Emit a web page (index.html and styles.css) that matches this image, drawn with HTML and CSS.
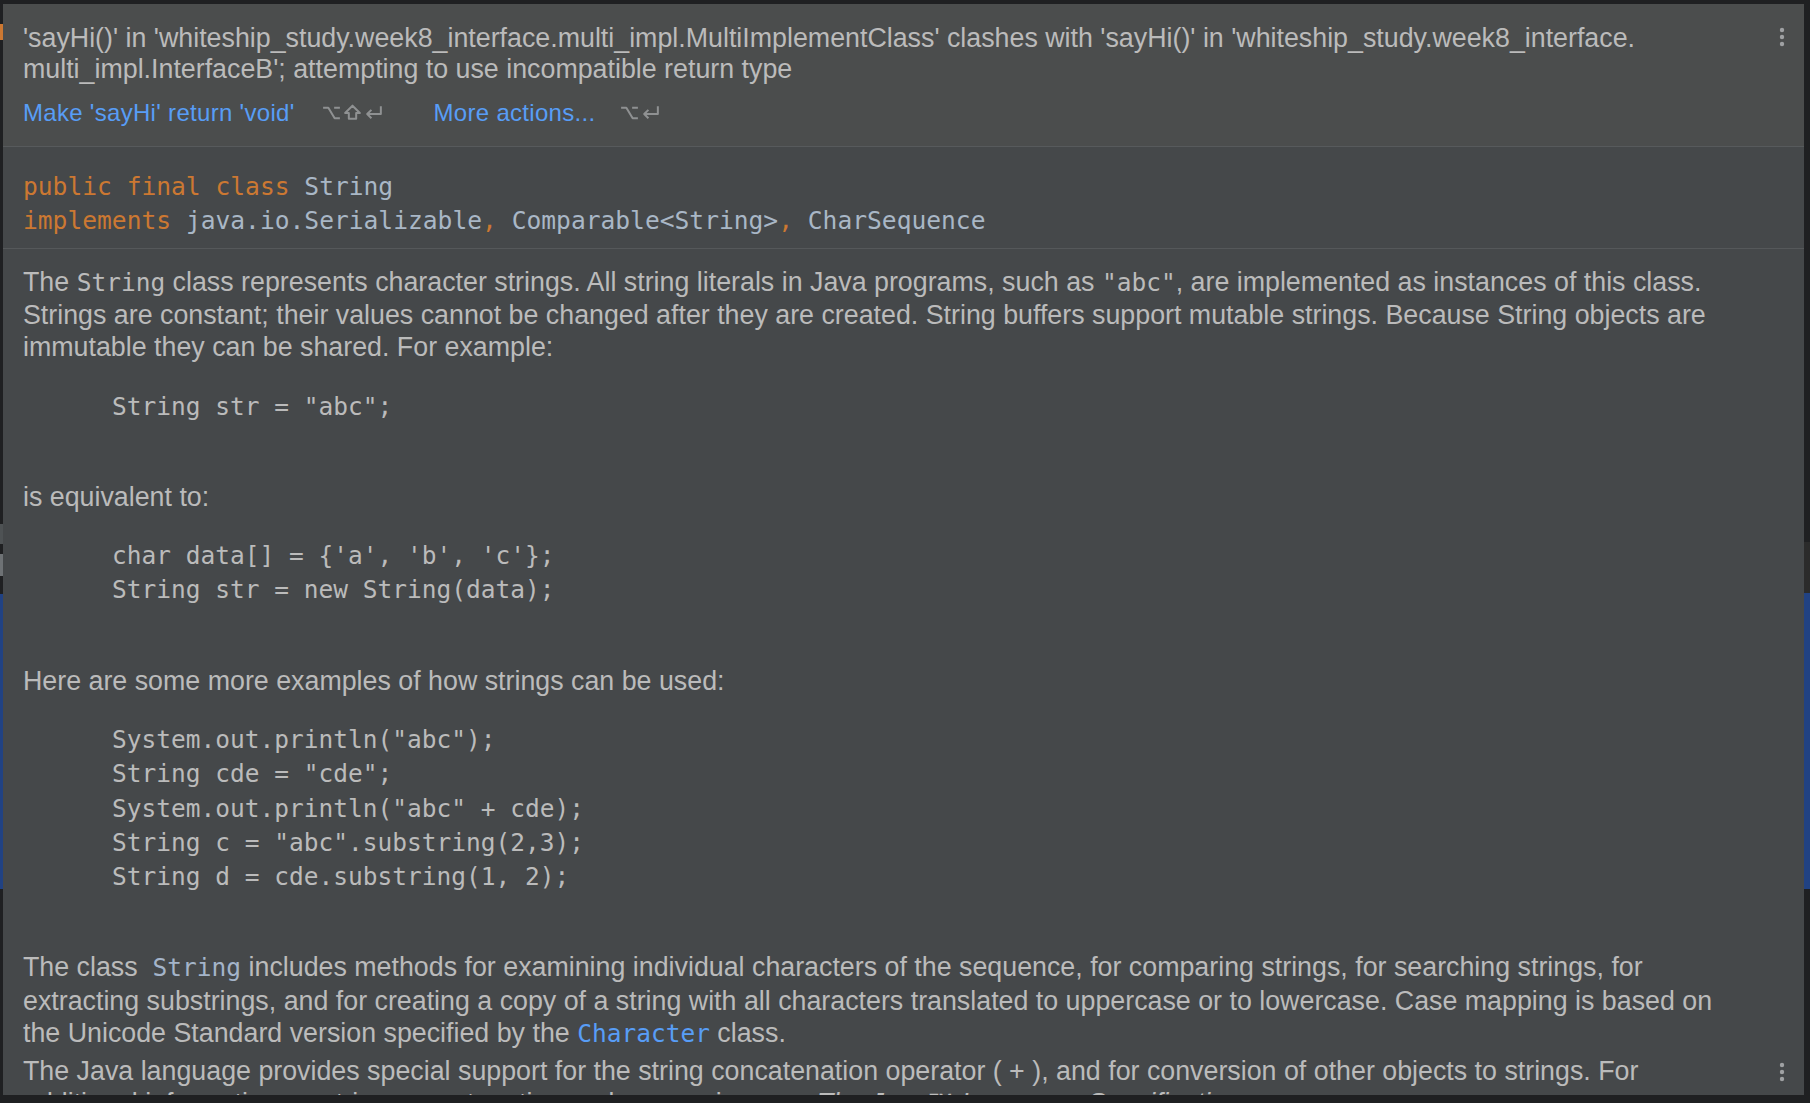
FILE: index.html
```html
<!DOCTYPE html>
<html lang="en">
<head>
<meta charset="utf-8">
<title>Documentation popup</title>
<link rel="stylesheet" href="styles.css">
</head>
<body>
<div class="backdrop">
  <div class="mark mark-orange"></div>
  <div class="mark mark-gray1"></div>
  <div class="mark mark-gray2"></div>
  <div class="mark band-left"></div>
  <div class="mark band-right-top"></div>
  <div class="mark band-right"></div>
</div>

<div class="popup">
  <section class="problem">
    <p class="problem-text">'sayHi()' in 'whiteship_study.week8_interface.multi_impl.MultiImplementClass' clashes with 'sayHi()' in 'whiteship_study.week8_interface.<br>multi_impl.InterfaceB'; attempting to use incompatible return type</p>
    <div class="actions">
      <a class="action">Make 'sayHi' return 'void'</a>
      <span class="keys">
        <svg class="key" viewBox="0 0 20 18"><path d="M2 4.5H7L13 14.5H18M12.5 4.5H18"/></svg>
        <svg class="key" viewBox="0 0 20 18"><path d="M10 2.5L17 9.5H13.5V15H6.5V9.5H3Z"/></svg>
        <svg class="key" viewBox="0 0 20 18"><path d="M17 3V10.5H4M8 6.5L4 10.5L8 14.5"/></svg>
      </span>
      <a class="action">More actions...</a>
      <span class="keys">
        <svg class="key" viewBox="0 0 20 18"><path d="M2 4.5H7L13 14.5H18M12.5 4.5H18"/></svg>
        <svg class="key" viewBox="0 0 20 18"><path d="M17 3V10.5H4M8 6.5L4 10.5L8 14.5"/></svg>
      </span>
    </div>
    <span class="dots dots-top"><svg viewBox="0 0 6 20"><circle cx="3" cy="3" r="2.2"/><circle cx="3" cy="10" r="2.2"/><circle cx="3" cy="17" r="2.2"/></svg></span>
  </section>

  <section class="signature">
    <div class="sig-line"><span class="kw">public final class</span> String</div>
    <div class="sig-line"><span class="kw">implements</span> java.io.Serializable<span class="kw">,</span> Comparable&lt;String&gt;<span class="kw">,</span> CharSequence</div>
  </section>

  <section class="doc">
    <p class="para">The <code class="mono">String</code> class represents character strings. All string literals in Java programs, such as <code class="mono">"abc"</code>, are implemented as instances of this class.<br>Strings are constant; their values cannot be changed after they are created. String buffers support mutable strings. Because String objects are<br>immutable they can be shared. For example:</p>
    <pre class="code">String str = "abc";</pre>
    <p class="para">is equivalent to:</p>
    <pre class="code">char data[] = {'a', 'b', 'c'};
String str = new String(data);</pre>
    <p class="para">Here are some more examples of how strings can be used:</p>
    <pre class="code">System.out.println("abc");
String cde = "cde";
System.out.println("abc" + cde);
String c = "abc".substring(2,3);
String d = cde.substring(1, 2);</pre>
    <p class="para">The class &nbsp;<code class="mono ref">String</code> includes methods for examining individual characters of the sequence, for comparing strings, for searching strings, for<br>extracting substrings, and for creating a copy of a string with all characters translated to uppercase or to lowercase. Case mapping is based on<br>the Unicode Standard version specified by the <a class="mono link">Character</a> class.</p>
    <p class="para tight">The Java language provides special support for the string concatenation operator ( + ), and for conversion of other objects to strings. For<br>additional information on string concatenation and conversion, see <i>The Java™ Language Specification</i>.</p>
  </section>
  <span class="dots dots-bottom"><svg viewBox="0 0 6 20"><circle cx="3" cy="3" r="2.2"/><circle cx="3" cy="10" r="2.2"/><circle cx="3" cy="17" r="2.2"/></svg></span>
</div>
</body>
</html>
```

FILE: styles.css
```css
* {
  box-sizing: border-box;
}

html, body {
  margin: 0;
  padding: 0;
}

body {
  width: 1810px;
  height: 1103px;
  overflow: hidden;
  background: #1f2022;
  position: relative;
  font-family: "Liberation Sans", Arial, sans-serif;
}

.backdrop .mark {
  position: absolute;
}

.mark-orange {
  left: 0;
  top: 24px;
  width: 3px;
  height: 16px;
  background: #cc7832;
}

.mark-gray1 {
  left: 0;
  top: 524px;
  width: 3px;
  height: 20px;
  background: #4e5254;
}

.mark-gray2 {
  left: 0;
  top: 554px;
  width: 3px;
  height: 22px;
  background: #6e7275;
}

.band-left {
  left: 0;
  top: 594px;
  width: 3px;
  height: 295px;
  background: #214283;
}

.band-right-top {
  right: 0;
  top: 542px;
  width: 6px;
  height: 51px;
  background: #2b2b2b;
}

.band-right {
  right: 0;
  top: 593px;
  width: 6px;
  height: 296px;
  background: #214283;
}

.popup {
  position: relative;
  margin: 4px 6px 0 3px;
  height: 1091px;
  overflow: hidden;
  background: #45484a;
  color: #bbbbbb;
}

.problem {
  position: relative;
  background: #4b4d4d;
  padding: 19px 20px 18px 20px;
  border-bottom: 1px solid #575a5c;
}

.problem-text {
  margin: 0;
  font-size: 26.8px;
  line-height: 31px;
  white-space: nowrap;
  color: #bbbbbb;
}

.actions {
  display: flex;
  align-items: center;
  margin-top: 12px;
  height: 31px;
  font-size: 24px;
  letter-spacing: 0.3px;
}

.action {
  color: #589df6;
  text-decoration: none;
}

.keys {
  display: flex;
  align-items: center;
  margin-left: 26px;
  margin-right: 50px;
}

.keys:last-child {
  margin-right: 0;
  margin-left: 24px;
}

.key {
  width: 21px;
  height: 19px;
  fill: none;
  stroke: #8f9192;
  stroke-width: 1.9;
  stroke-linejoin: round;
}

.dots {
  position: absolute;
  right: 19px;
  width: 6px;
  height: 20px;
  display: block;
}

.dots svg {
  display: block;
  width: 6px;
  height: 20px;
  fill: #9fa1a3;
}

.dots-top {
  top: 23px;
}

.dots-bottom {
  top: 1058px;
}

.signature {
  background: #45484a;
  padding: 23px 20px 10px 20px;
  border-bottom: 1px solid #55585a;
  font-family: "DejaVu Sans Mono", "Liberation Mono", monospace;
  font-size: 24.6px;
  line-height: 34px;
  color: #a9b7c6;
  white-space: nowrap;
}

.kw {
  color: #cc7832;
}

.doc {
  padding: 17px 20px 0 20px;
}

.para {
  margin: 0;
  font-size: 26.8px;
  line-height: 32.2px;
  white-space: nowrap;
}

.para.tight {
  margin-top: 5px;
}

.mono {
  font-family: "DejaVu Sans Mono", "Liberation Mono", monospace;
  font-size: 24.5px;
}

.ref {
  color: #a4b4c9;
}

.link {
  color: #589df6;
  text-decoration: none;
}

.code {
  margin: 26px 0 23px 0;
  padding: 0 0 34px 89px;
  font-family: "DejaVu Sans Mono", "Liberation Mono", monospace;
  font-size: 24.5px;
  line-height: 34.3px;
  color: #bbbbbb;
}
```
